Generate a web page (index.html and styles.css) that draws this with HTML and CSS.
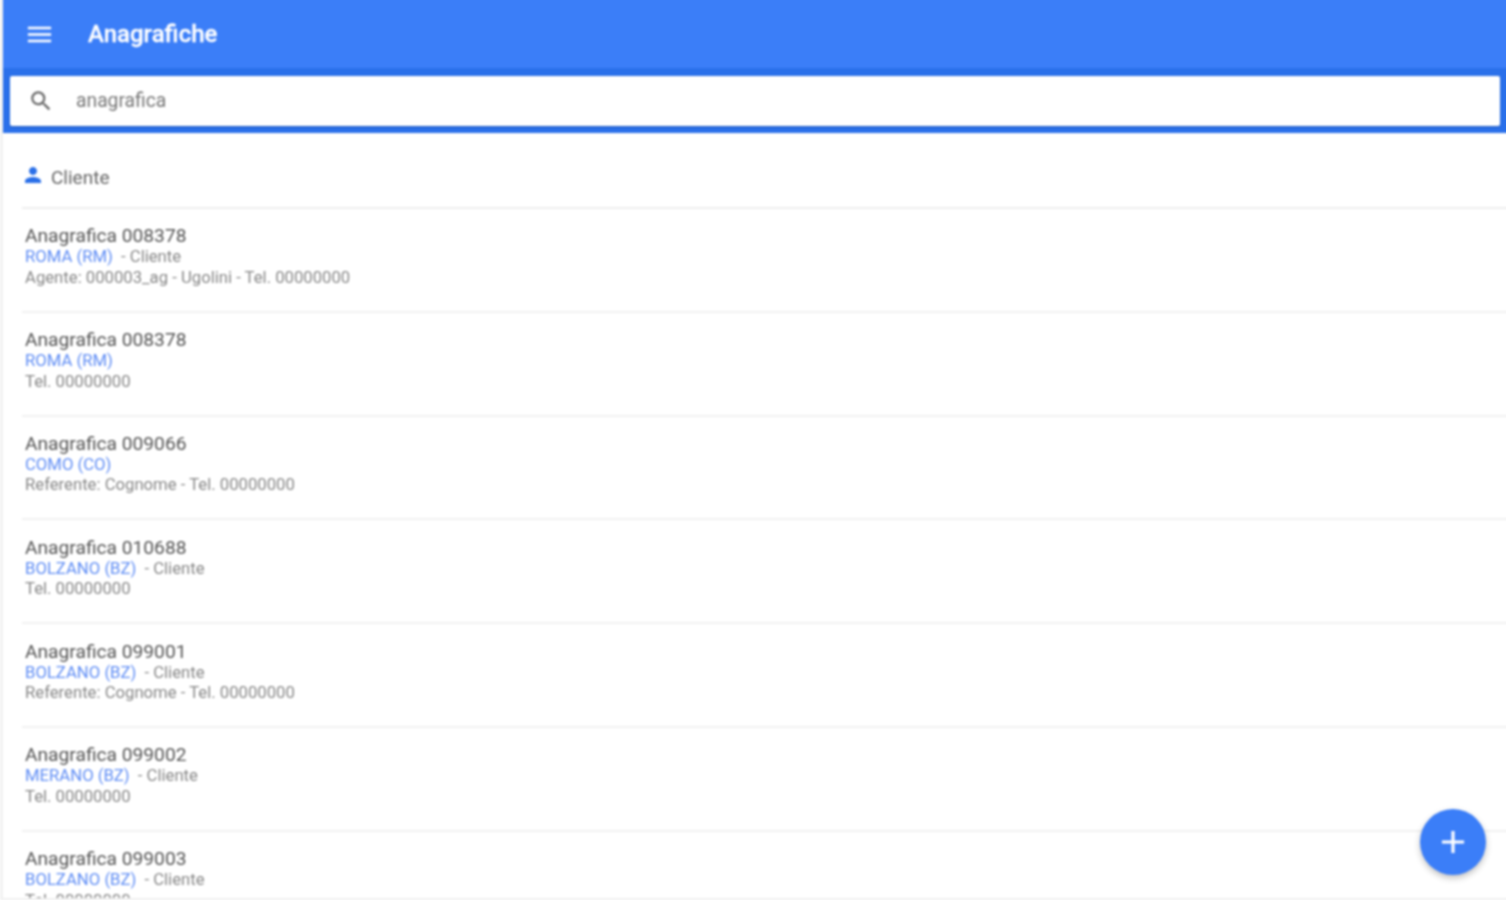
FILE: index.html
```html
<!DOCTYPE html>
<html lang="it">
<head>
<meta charset="utf-8">
<title>Anagrafiche</title>
<link rel="stylesheet" href="styles.css">
</head>
<body>
<div class="app">
  <header class="toolbar">
    <svg class="menu-icon" viewBox="0 0 24 24"><path d="M3 18h18v-2H3v2zm0-5h18v-2H3v2zm0-7v2h18V6H3z"/></svg>
    <h1 class="title">Anagrafiche</h1>
  </header>
  <div class="search-wrap">
    <div class="search">
      <svg class="search-icon" viewBox="0 0 24 24"><path d="M15.5 14h-.79l-.28-.27A6.47 6.47 0 0 0 16 9.5 6.5 6.5 0 1 0 9.5 16c1.61 0 3.09-.59 4.23-1.57l.27.28v.79l5 4.99L20.49 19l-4.99-5zm-6 0C7.01 14 5 11.99 5 9.5S7.01 5 9.5 5 14 7.01 14 9.5 11.99 14 9.5 14z"/></svg>
      <span class="search-text">anagrafica</span>
    </div>
  </div>
  <main class="list">
    <div class="group">
      <svg class="person-icon" viewBox="0 0 24 24"><path d="M12 12c2.21 0 4-1.79 4-4s-1.79-4-4-4-4 1.79-4 4 1.79 4 4 4zm0 2c-2.67 0-8 1.34-8 4v2h16v-2c0-2.66-5.33-4-8-4z"/></svg>
      <span class="group-name">Cliente</span>
    </div>
    <div class="row">
      <div class="name">Anagrafica 008378</div>
      <div class="place"><span class="city">ROMA (RM)</span><span class="kind"> - Cliente</span></div>
      <div class="info">Agente: 000003_ag - Ugolini - Tel. 00000000</div>
    </div>
    <div class="row">
      <div class="name">Anagrafica 008378</div>
      <div class="place"><span class="city">ROMA (RM)</span></div>
      <div class="info">Tel. 00000000</div>
    </div>
    <div class="row">
      <div class="name">Anagrafica 009066</div>
      <div class="place"><span class="city">COMO (CO)</span></div>
      <div class="info">Referente: Cognome - Tel. 00000000</div>
    </div>
    <div class="row">
      <div class="name">Anagrafica 010688</div>
      <div class="place"><span class="city">BOLZANO (BZ)</span><span class="kind"> - Cliente</span></div>
      <div class="info">Tel. 00000000</div>
    </div>
    <div class="row">
      <div class="name">Anagrafica 099001</div>
      <div class="place"><span class="city">BOLZANO (BZ)</span><span class="kind"> - Cliente</span></div>
      <div class="info">Referente: Cognome - Tel. 00000000</div>
    </div>
    <div class="row">
      <div class="name">Anagrafica 099002</div>
      <div class="place"><span class="city">MERANO (BZ)</span><span class="kind"> - Cliente</span></div>
      <div class="info">Tel. 00000000</div>
    </div>
    <div class="row">
      <div class="name">Anagrafica 099003</div>
      <div class="place"><span class="city">BOLZANO (BZ)</span><span class="kind"> - Cliente</span></div>
      <div class="info">Tel. 00000000</div>
    </div>
  </main>
  <div class="bottom-edge"></div>
  <button class="fab" type="button" aria-label="Aggiungi">
    <svg class="fab-icon" viewBox="0 0 24 24"><path d="M19 13h-6v6h-2v-6H5v-2h6V5h2v6h6v2z"/></svg>
  </button>
</div>
</body>
</html>
```
FILE: styles.css
```css
* { box-sizing: border-box; }
html, body { margin: 0; height: 100%; overflow: hidden; background: #fff; }
body { font-family: Roboto, "Liberation Sans", sans-serif; }
.app {
  position: relative;
  height: 904px;
  margin: -4px -4px 0 0;
  padding-left: 3px;
  background: #fff;
  overflow: hidden;
  box-shadow: inset 3px 0 0 #f2f2f2;
  filter: blur(0.8px);
}
.toolbar {
  height: 72px;
  padding: 4px 0 0 21px;
  background: #3b7ef8;
  display: flex;
  align-items: center;
  gap: 24px;
}
.menu-icon { width: 31px; height: 31px; fill: #fff; flex: none; }
.title { margin: 0 0 0 9px; font-size: 24px; font-weight: 500; color: #fff; -webkit-text-stroke: 0.3px #fff; }
.search-wrap {
  height: 65px;
  background: #2a70ea;
  padding: 8px 10px 7px 7px;
}
.search {
  height: 50px;
  background: #fff;
  border-radius: 2px;
  display: flex;
  align-items: center;
  padding-left: 18px;
  box-shadow: 0 1px 2px rgba(0,0,0,.2);
}
.search-icon { width: 26px; height: 26px; fill: #666; flex: none; }
.search-text { margin-left: 22px; margin-top: -2px; font-size: 19.3px; color: #777; }
.list { padding-left: 19px; }
.group {
  height: 76px;
  display: flex;
  align-items: center;
  gap: 5px;
  padding-top: 14px;
  border-bottom: 2px solid #eee;
}
.person-icon { width: 24px; height: 24px; fill: #2a6fe8; flex: none; margin-top: -5px; margin-left: -1px; }
.group-name { margin-left: 1px; font-size: 19px; color: #666; }
.row {
  height: 103.8px;
  padding: 16.4px 0 0 3px;
  border-bottom: 2px solid #f1f1f1;
}
.name { font-size: 19.2px; line-height: 22px; color: #555; }
.place, .info { font-size: 16.7px; line-height: 20.5px; }
.city { color: #5f8df5; }
.kind { color: #888; margin-left: 4px; }
.info { color: #888; }
.bottom-edge {
  position: absolute;
  left: 0;
  right: 0;
  bottom: 0;
  height: 2px;
  background: #f0f0f0;
}
.fab {
  position: absolute;
  left: 1420px;
  top: 813px;
  width: 66px;
  height: 66px;
  border: 0;
  border-radius: 50%;
  background: #3b7ef8;
  display: flex;
  align-items: center;
  justify-content: center;
  padding: 0;
  box-shadow: 0 3px 6px rgba(0,0,0,.25);
}
.fab-icon { width: 38px; height: 38px; fill: #fff; }
```
